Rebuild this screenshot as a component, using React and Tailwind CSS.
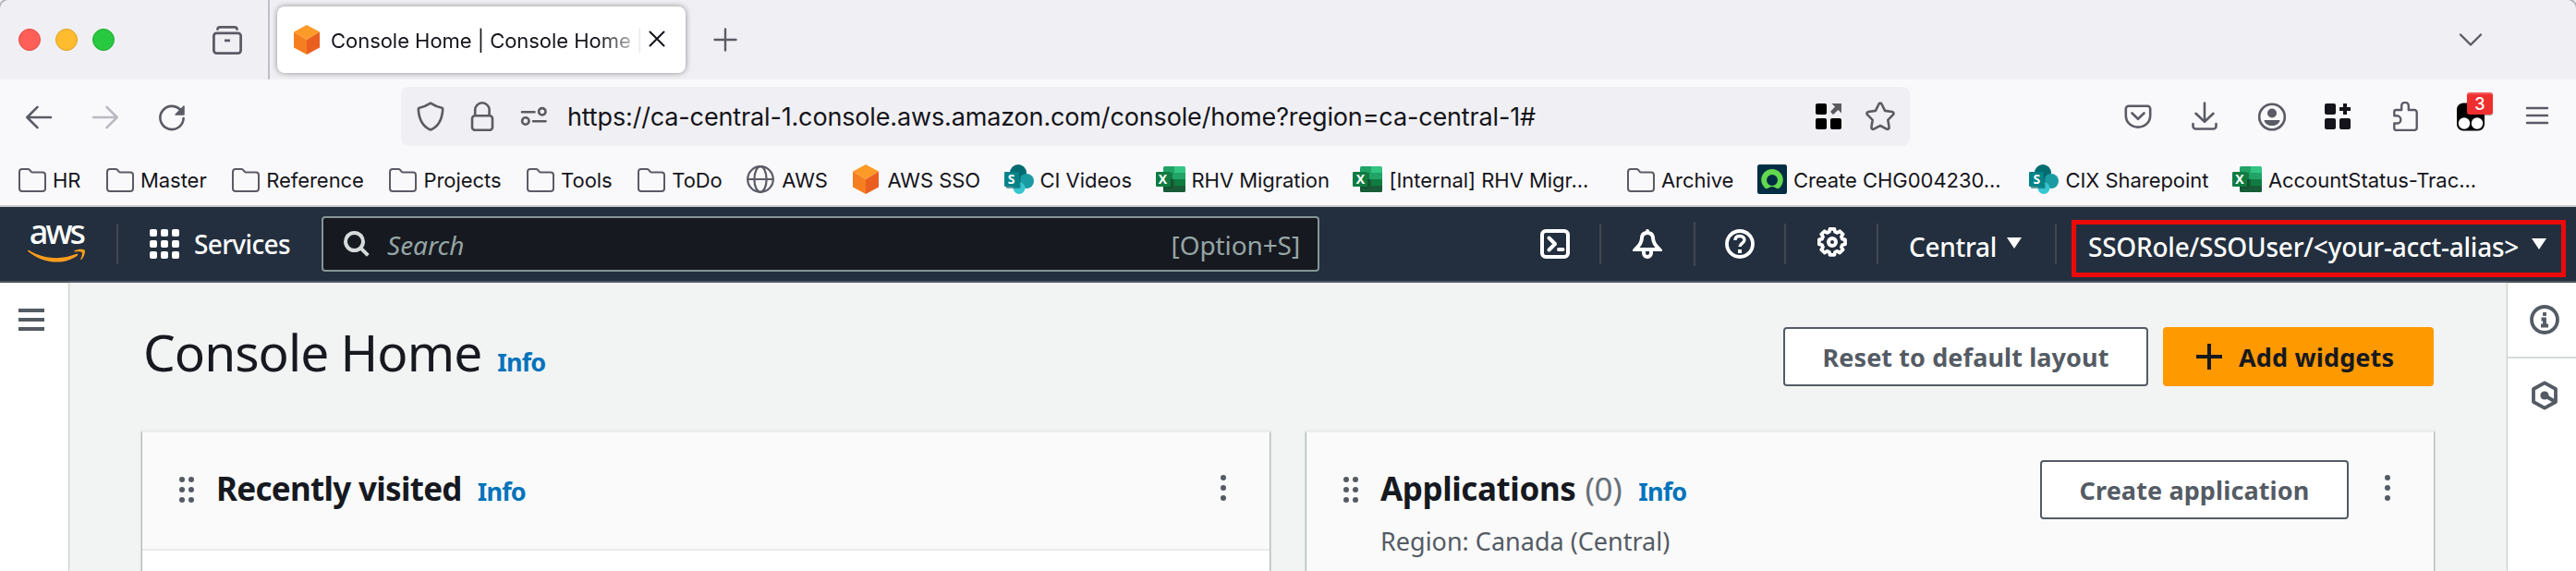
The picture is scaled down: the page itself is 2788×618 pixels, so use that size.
import React from "react";

const S = ({ size = 32, vb, w = 2.6, className = "", children }) => (
  <svg
    width={size}
    height={size}
    viewBox={vb || "0 0 32 32"}
    fill="none"
    stroke="currentColor"
    strokeWidth={w}
    strokeLinecap="round"
    strokeLinejoin="round"
    className={"shrink-0 " + className}
  >
    {children}
  </svg>
);

const Folder = () => (
  <S w={2} vb="-1 0 32 32" className="text-[#5b5b66]">
    <path d="M5 5h6.2c.8 0 1.4.3 1.9.9l1.8 2.1c.3.4.8.6 1.3.6H27a3 3 0 0 1 3 3V26a3 3 0 0 1-3 3H5a3 3 0 0 1-3-3V8a3 3 0 0 1 3-3z" />
  </S>
);

const Globe = () => (
  <S w={2.2} className="text-[#5b5b66]">
    <circle cx="16" cy="16" r="13.8" />
    <ellipse cx="16" cy="16" rx="6.6" ry="13.8" />
    <path d="M2.5 16h27" />
  </S>
);

const Cube = ({ className = "" }) => (
  <S w={0} className={className}>
    <path d="M16 0l14 7.5L16 16 2 7.5z" fill="#fe9a28" />
    <path d="M2 7.5L16 16v16L2 24.5z" fill="#f57e20" />
    <path d="M30 7.5L16 16v16l14-7.5z" fill="#ea5f20" />
  </S>
);

const SharePoint = () => (
  <span className="relative block size-8 shrink-0">
    <S w={0}>
      <circle cx="15" cy="9" r="9" fill="#036c70" />
      <circle cx="24" cy="18" r="8" fill="#1a9ba1" />
      <circle cx="16" cy="25.5" r="6.5" fill="#37c6d0" />
      <rect x="2" y="9" width="15.500" height="17" rx="1" fill="#035e62" opacity=".6" />
      <rect x="0" y="8" width="16" height="16" rx="1.2" fill="#038387" />
    </S>
    <span className="absolute left-0 top-2 w-4 text-center font-['Open_Sans',sans-serif] text-[14px] font-bold leading-4 text-white">S</span>
  </span>
);

const Excel = () => (
  <span className="relative block size-8 shrink-0">
    <S w={0}>
      <path d="M8 3.500a1.500 1.500 0 0 1 1.500-1.500H20v9H8z" fill="#21a366" />
      <path d="M20 2h10.500A1.500 1.500 0 0 1 32 3.500V11H20z" fill="#33c481" />
      <path d="M8 9h12v7H8z" fill="#21a366" />
      <path d="M20 9h12v7H20z" fill="#21a366" />
      <path d="M8 16h12v7H8z" fill="#185c37" />
      <path d="M20 16h12v7H20z" fill="#107c41" />
      <path d="M8 23h24v5.500a1.500 1.500 0 0 1-1.500 1.500h-21A1.500 1.500 0 0 1 8 28.500z" fill="#185c37" />
      <rect x="8" y="9" width="10" height="17" fill="#0b4a28" opacity=".5" />
      <rect x="0" y="8" width="16" height="16" rx="1.2" fill="#107c41" />
    </S>
    <span className="absolute left-0 top-2 w-4 text-center font-['Open_Sans',sans-serif] text-[14px] font-bold leading-4 text-white">X</span>
  </span>
);

const Now = () => (
  <S w={0}>
    <rect width="32" height="32" rx="2.500" fill="#032d42" />
    <path d="M16 5C9.400 5 4.200 10.300 4.200 16.600c0 3.500 1.600 6.700 4 8.900.9.800 2.200.9 3.200.2a7.800 7.800 0 0 1 9.200 0c1 .7 2.300.6 3.200-.2a12 12 0 0 0 4-8.900C27.800 10.300 22.600 5 16 5zm0 18a6 6 0 1 1 0-12 6 6 0 0 1 0 12z" fill="#62d84e" />
  </S>
);

const icons = { f: Folder, g: Globe, c: Cube, s: SharePoint, x: Excel, n: Now };
const bookmarks = [
  ["f", "HR"],
  ["f", "Master"],
  ["f", "Reference"],
  ["f", "Projects"],
  ["f", "Tools"],
  ["f", "ToDo"],
  ["g", "AWS"],
  ["c", "AWS SSO"],
  ["s", "CI Videos"],
  ["x", "RHV Migration"],
  ["x", "[Internal] RHV Migr...", 1],
  ["f", "Archive"],
  ["n", "Create CHG004230...", 1],
  ["s", "CIX Sharepoint"],
  ["x", "AccountStatus-Trac...", 1],
];

const TabBar = () => (
  <div className="flex h-[86px] items-center bg-[#f0f0f4] text-[#5b5b66]">
    <div className="ml-5 flex gap-4">
      <i className="size-6 rounded-full border border-[#e14942] bg-[#ff5f57]" />
      <i className="size-6 rounded-full border border-[#dfa023] bg-[#febc2e]" />
      <i className="size-6 rounded-full border border-[#1dac2b] bg-[#28c840]" />
    </div>
    <S w={2.800} className="ml-[106px]">
      <path d="M5.500 4.500c.3-1.600 1.200-2.100 2.500-2.100h16c1.300 0 2.200.5 2.500 2.100" />
      <rect x="1.400" y="8.800" width="29.200" height="21.800" rx="3" />
      <path d="M13 16.800h6" strokeLinecap="butt" />
    </S>
    <div className="ml-7 h-full w-0.5 bg-[#bfbfc9]" />
    <div className="ml-2 flex h-[72px] w-[442px] items-center rounded-lg bg-white text-[#15141a] shadow-[0_0_6px_rgba(0,0,0,0.42)]">
      <Cube className="ml-4" />
      <span className="ml-[10px] mt-0.5 w-[345px] whitespace-nowrap bg-linear-to-r from-[#15141a] from-[84%] to-white to-[98%] bg-clip-text text-[22px] leading-8 tracking-[-0.04px] text-transparent">
        Console Home | Console Home |
      </span>
      <S size={20} vb="0 0 20 20" w={2} className="mb-0.5 ml-[-2px]">
        <path d="M2.500 2.500l15 15M17.500 2.500l-15 15" />
      </S>
    </div>
    <S w={2.400} className="ml-[27px]">
      <path d="M16 4.500v23M4.500 16h23" />
    </S>
    <S w={2.400} className="ml-auto mr-[98px]">
      <path d="M5 10.500l11 11 11-11" />
    </S>
  </div>
);

const Toolbar = () => (
  <div className="flex h-20 items-center text-[#5b5b66]">
    <S w={2.600} className="ml-[26px] mt-0.5">
      <path d="M3.500 16H29M14.500 4.800L3.300 16l11.200 11.200" />
    </S>
    <S w={2.600} className="ml-10 mt-0.5 text-[#b9b9c1]">
      <path d="M28.500 16H3M17.500 4.800L28.700 16 17.500 27.200" />
    </S>
    <S w={2.600} className="ml-10 mt-1">
      <path d="M26.500 8.500A12.600 12.600 0 1 0 28.600 16" />
      <path d="M29 3v9h-9z" fill="currentColor" strokeWidth="1.500" />
    </S>
    <div className="ml-[232px] flex h-16 w-[1633px] items-center rounded-lg bg-[#f0f0f4] text-[#5b5b60]">
      <S w={2.600} className="ml-4">
        <path d="M16 1.600c4 2.600 8 4.300 12.300 5.200.6.100 1 .6.900 1.300C28.500 19.500 24.800 27 16 30.500 7.200 27 3.500 19.500 2.800 8.100c-.1-.7.300-1.200.9-1.300C8 5.900 12 4.200 16 1.600z" />
      </S>
      <S w={2.600} className="ml-[24px]">
        <path d="M8.200 14.500V9a7.700 7.700 0 0 1 15.400 0v5.500" />
        <rect x="5" y="15.300" width="22" height="15.500" rx="3" />
      </S>
      <S w={2.600} className="ml-6">
        <path d="M3 11.200h13.500M15 21.200h13.500" />
        <circle cx="24.800" cy="10.800" r="3.700" />
        <circle cx="6.800" cy="21" r="3.700" />
      </S>
      <span className="ml-5 mt-0.5 whitespace-nowrap text-[27px] leading-9 tracking-[-0.15px] text-[#15141a]">
        https://ca-central-1.console.aws.amazon.com/console/home?region=ca-central-1#
      </span>
      <S w={0} className="ml-auto mr-6 text-black">
        <rect x="2" y="2" width="12" height="12" rx="2" fill="currentColor" />
        <rect x="2" y="18" width="12" height="12" rx="2" fill="currentColor" />
        <rect x="18" y="18" width="12" height="12" rx="2" fill="currentColor" />
        <path d="M19.500 2H30v10.500l-3.500-3.500-5.500 5-3-3 5-5.500z" fill="#5b5b60" />
      </S>
      <S w={2.600} className="mr-4">
        <path d="M14.400 2.700c.6-1.400 2.600-1.400 3.200 0l3.500 7.200 7.800 1.100c1.500.200 2.100 2.100 1 3.200l-5.600 5.600 1.300 7.900c.3 1.500-1.300 2.700-2.700 2L16 26l-6.900 3.700c-1.400.7-3-.5-2.700-2l1.300-7.900-5.600-5.600c-1.100-1.100-.5-3 1-3.200l7.800-1.100z" />
      </S>
    </div>
    <S w={2.600} className="ml-[231px]">
      <path d="M5.800 4.800h20.400a3 3 0 0 1 3 3V15c0 7.500-6 12.600-13.200 12.600S2.800 22.500 2.800 15V7.800a3 3 0 0 1 3-3z" />
      <path d="M9.500 12.500l6.500 6.300 6.500-6.300" />
    </S>
    <S w={2.600} className="ml-10">
      <path d="M16 1.500v20M6.500 12.800l9.500 9 9.500-9M3.500 24v2.500a3 3 0 0 0 3 3h19a3 3 0 0 0 3-3V24" />
    </S>
    <S w={2.600} className="ml-[41px]">
      <circle cx="16" cy="16.500" r="13.800" />
      <circle cx="16" cy="12.500" r="5" fill="currentColor" stroke="none" />
      <path d="M7.500 20h17c-.6 4-4.400 6-8.500 6s-7.900-2-8.500-6z" fill="currentColor" stroke="none" />
    </S>
    <S w={0} className="ml-[39px] text-[#15141a]">
      <rect x="2" y="2" width="12" height="12" rx="2" fill="currentColor" />
      <rect x="2" y="18" width="12" height="12" rx="2" fill="currentColor" />
      <rect x="18" y="18" width="12" height="12" rx="2" fill="currentColor" />
      <path d="M22 2h4v4h4v4h-4v4h-4v-4h-4V6h4z" fill="currentColor" />
    </S>
    <S w={2.400} className="ml-[42px]">
      <path d="M3.300 15.200V11a2 2 0 0 1 2-2h5.900V4.600a3.800 3.800 0 0 1 7.600 0V9h6.400a2.500 2.500 0 0 1 2.500 2.500v16.900a2.500 2.500 0 0 1-2.500 2.500H5.300a2 2 0 0 1-2-2v-5.400h2.900a4.100 4.100 0 0 0 0-8.200z" />
    </S>
    <div className="relative ml-[38px] size-8 shrink-0">
      <S w={0}>
        <rect x="1" y="1.500" width="30" height="30" rx="7" fill="#000" />
        <circle cx="9" cy="23.500" r="6.200" fill="#fff" />
        <circle cx="23" cy="23.500" r="6.200" fill="#fff" />
      </S>
      <span className="absolute -top-2.5 left-3 flex h-6 w-7 items-center justify-center rounded-[3px] border-t-2 border-[#f4595f] bg-[#ef2f2f] text-[18px] font-medium leading-none text-white shadow-[0_1px_1px_rgba(0,0,0,0.35)]">
        3
      </span>
    </div>
    <S w={2.400} className="ml-10">
      <path d="M5 7h22M5 15h22M5 23h22" />
    </S>
  </div>
);

const Bookmarks = () => (
  <div className="flex h-[58px] items-start gap-[25.5px] border-b-2 border-[#ccccce] pl-[18px] pt-3 text-[22px] leading-8 tracking-[-0.04px] text-[#15141a]">
    {bookmarks.map(([k, t, fixed], i) => {
      const Icon = icons[k];
      return (
        <div key={i} className="flex shrink-0 gap-[7px]">
          <Icon />
          <span className={"mt-px whitespace-nowrap " + (fixed ? "w-[230px]" : "")}>{t}</span>
        </div>
      );
    })}
  </div>
);

const Sep = ({ className = "" }) => <div className={"h-11 w-0.5 shrink-0 bg-[#414750] " + className} />;

const Caret = ({ className = "" }) => (
  <S size={16} vb="0 0 16 12" w={0} className={"text-white " + className}>
    <path d="M0 0h16L8 12z" fill="currentColor" />
  </S>
);

const Header = () => (
  <div className="flex h-[82px] items-center border-b-2 border-[#545b64] bg-[#232f3e] font-['Noto_Sans','Open_Sans',sans-serif] text-[28px] text-white">
    <div className="ml-[30px] flex h-12 w-[62px] flex-col items-center">
      <span className="h-[29px] text-[36px] font-medium leading-[22px] tracking-[-2.9px]">aws</span>
      <svg width="62" height="16" viewBox="0 0 62 16" fill="#ff9d1c">
        <path d="M0 2.200c.3-.6.900-.7 1.500-.2C10 7 20 10.200 31 10.200c7.500 0 15-1.600 21.800-4.400 1.200-.5 2.100.8 1 1.600C48 12 39.500 14.600 31.500 14.600 19.500 14.600 8.500 10 .4 2.900c-.3-.2-.5-.5-.4-.7z" />
        <path d="M50.500 2.600C53.500.500 60.300.300 61.500 1.600c1.300 1.500-.4 7.500-3.300 10.300-.6.600-1.200.3-.9-.4.900-2.200 2.200-6 1.400-7.300-.8-1.200-5-.9-7.500-.7-.8.100-1.200-.5-.7-.9z" />
      </svg>
    </div>
    <Sep className="ml-[34px]" />
    <div className="ml-[34px] grid grid-cols-3 gap-1">
      {Array.from({ length: 9 }, (_, i) => (
        <i key={i} className="size-2 rounded-[2px] bg-white" />
      ))}
    </div>
    <span className="ml-4 w-[104px] font-medium leading-8 tracking-[-0.65px]">Services</span>
    <div className="ml-[34px] flex h-[60px] w-[1080px] items-center rounded-[4px] border-2 border-[#879596] bg-[#16191f] text-[#95a5a6]">
      <S w={4} className="ml-5 text-[#d5dbdb]">
        <circle cx="13.500" cy="13.500" r="9.500" />
        <path d="M20.300 20.300l8 8" strokeLinecap="butt" />
      </S>
      <span className="ml-[17px] mt-0.5 italic leading-8">Search</span>
      <span className="ml-auto mr-[19px] mt-0.5 leading-8 tracking-[-0.1px]">[Option+S]</span>
    </div>
    <S w={4} className="ml-[239px]">
      <rect x="2" y="2" width="28" height="28" rx="4" />
      <path d="M9.500 9.500L16 16l-6.500 6.500M20 22h4.500" />
    </S>
    <Sep className="ml-8" />
    <S w={4} className="ml-[34px]">
      <path d="M16 4c-3.500 0-5.800 2-6 5.500C9.700 14.800 7.500 17.300 3 22h26c-4.500-4.700-6.700-7.200-7-12.500C21.800 6 19.500 4 16 4z" strokeLinejoin="miter" />
      <path d="M16 2v2M12 23v3a4 4 0 0 0 8 0v-3" />
    </S>
    <Sep className="ml-[34px] h-12" />
    <S w={3.800} className="ml-8">
      <circle cx="16" cy="16" r="14" />
      <path d="M11 12c0-3 2.200-4.500 5-4.500s5 1.700 5 4.200c0 3.600-5 3.600-5 7.300" strokeLinecap="butt" strokeWidth="3.400" />
      <path d="M16 22v4" strokeLinecap="butt" strokeWidth="4" />
    </S>
    <Sep className="ml-8" />
    <S w={4} className="-mt-1 ml-[34px]">
      <path d="M13.400 2h5.200l.7 3.300 2.600 1.100 2.900-1.800 3.600 3.600-1.800 2.900 1.100 2.500 3.300.8v5.200l-3.300.7-1.100 2.600 1.800 2.900-3.600 3.600-2.900-1.800-2.600 1.100-.7 3.300h-5.200l-.7-3.300-2.600-1.100-2.900 1.800-3.600-3.600 1.800-2.900-1.100-2.600L1 19.600v-5.200l3.300-.8 1.100-2.500-1.800-2.900 3.600-3.600 2.900 1.800 2.600-1.100z" transform="translate(.9 -.1) scale(.94)" />
      <circle cx="16" cy="16" r="4" />
    </S>
    <Sep className="ml-8" />
    <div className="ml-[33px] flex w-[158px] items-center">
      <span className="mt-1.5 w-[106px] font-medium leading-8 tracking-[-0.3px]">Central</span>
      <Caret className="-mt-0.5" />
    </div>
    <Sep />
    <div className="ml-4 mt-2.5 flex h-[62px] w-[535px] items-center border-5 border-[#eb0a0a]">
      <span className="-mt-1 ml-[13px] w-[480px] whitespace-nowrap font-medium leading-8 tracking-[-0.24px]">
        SSORole/SSOUser/&lt;your-acct-alias&gt;
      </span>
      <Caret className="-mt-2.5" />
    </div>
  </div>
);

const Handle = () => (
  <div className="grid w-4 grid-cols-2 gap-x-1 gap-y-[5px]">
    {Array.from({ length: 6 }, (_, i) => (
      <i key={i} className="size-1.5 rounded-full bg-[#545b64]" />
    ))}
  </div>
);

const Kebab = ({ className = "" }) => (
  <div className={"flex flex-col gap-[5px] " + className}>
    {[0, 1, 2].map((i) => (
      <i key={i} className="size-1.5 rounded-full bg-[#545b64]" />
    ))}
  </div>
);

const Info = ({ className = "" }) => (
  <span className={"text-[27px] font-bold tracking-[-0.8px] text-[#0073bb] " + className}>Info</span>
);

const card =
  "h-[200px] w-[1220px] border-t-2 border-[#eaeded] bg-[#fafafa] shadow-[0_2px_2px_rgba(0,28,36,0.3),1px_1px_2px_rgba(0,28,36,0.25),-1px_1px_2px_rgba(0,28,36,0.25)]";

export default function App() {
  return (
    <div className="h-[618px] w-[2788px] overflow-hidden bg-[#f2f2f2] font-['Inter',sans-serif]">
      <div className="h-full overflow-hidden rounded-t-[10px] bg-[#f9f9fb] shadow-[0_0_0_2px_#b5b5b8]">
        <TabBar />
        <Toolbar />
        <Bookmarks />
        <Header />
        <div className="flex h-[312px] bg-[#f2f3f3] font-['Noto_Sans','Open_Sans',sans-serif] text-[#16191f]">
          <div className="w-[74px] bg-white pl-5 pt-7 shadow-[0_0_2px_rgba(0,0,0,0.5)]">
            <div className="flex w-7 flex-col gap-1.5">
              <i className="h-1 bg-[#545b64]" />
              <i className="h-1 bg-[#545b64]" />
              <i className="h-1 bg-[#545b64]" />
            </div>
          </div>
          <div className="ml-20 w-[2480px] pt-12">
            <div className="flex h-16 items-start">
              <h1 className="ml-px mt-[-5px] flex items-baseline text-[55px] leading-[64px] tracking-[-0.95px]">
                Console Home
                <Info className="ml-[17px]" />
              </h1>
              <button className="ml-auto h-16 w-[395px] rounded-[4px] border-2 border-[#545b64] bg-white pt-0.5 text-[27px] font-bold leading-8 tracking-[0.1px] text-[#545b64]">
                Reset to default layout
              </button>
              <button className="ml-4 flex h-16 w-[293px] items-center rounded-[4px] bg-[#ff9900] pt-0.5 text-[27px] font-bold leading-8 tracking-[0.15px]">
                <S w={4} size={28} vb="0 0 28 28" className="-mt-0.5 ml-9">
                  <path d="M14 0v28M0 14h28" strokeLinecap="butt" />
                </S>
                <span className="ml-[18px]">Add widgets</span>
              </button>
            </div>
            <div className="mt-12 flex gap-10">
              <section className={card}>
                <div className="flex h-[128px] items-start border-b-2 border-[#eaeded]">
                  <div className="ml-10 mt-12"><Handle /></div>
                  <h2 className="ml-6 mt-[37px] flex items-baseline text-[35px] font-bold leading-[48px] tracking-[-0.7px]">
                    Recently visited
                    <Info className="ml-[17px]" />
                  </h2>
                  <Kebab className="ml-auto mr-[47px] mt-[46px]" />
                </div>
                <div className="h-[70px] bg-white" />
              </section>
              <section className={card}>
                <div className="flex items-start">
                  <div className="ml-10 mt-12"><Handle /></div>
                  <div className="ml-[24px] mt-[37px]">
                    <h2 className="flex items-baseline text-[35px] font-bold leading-[48px] tracking-[-0.4px]">
                      Applications
                      <span className="ml-[10px] font-normal text-[#687078]">(0)</span>
                      <Info className="ml-[18px]" />
                    </h2>
                    <p className="mt-[12px] text-[27px] leading-9 text-[#545b64]">Region: Canada (Central)</p>
                  </div>
                  <button className="ml-auto mt-[30px] h-16 w-[334px] rounded-[4px] border-2 border-[#545b64] bg-white pt-0.5 text-[27px] font-bold leading-8 tracking-[0.12px] text-[#545b64]">
                    Create application
                  </button>
                  <Kebab className="ml-[39px] mr-[47px] mt-[46px]" />
                </div>
              </section>
            </div>
          </div>
          <div className="ml-auto w-[74px] bg-white text-[#545b64] shadow-[0_0_2px_rgba(0,0,0,0.5)]">
            <div className="flex h-[82px] items-center border-b-2 border-[#d5dbdb] pl-6">
              <S w={3.800}>
                <circle cx="16" cy="16" r="14" />
                <path d="M16 8v4M12.500 15.500H16v7M12 22.500h8" strokeLinecap="butt" strokeLinejoin="miter" strokeWidth="3.800" />
              </S>
            </div>
            <S w={3.800} className="ml-6 mt-6">
              <path d="M16 2.300L28 9v14l-12 6.700L4 23V9z" />
              <circle cx="16" cy="16" r="4.600" fill="currentColor" stroke="none" />
              <path d="M16 16l11 6.500" strokeLinecap="butt" />
            </S>
          </div>
        </div>
      </div>
    </div>
  );
}
